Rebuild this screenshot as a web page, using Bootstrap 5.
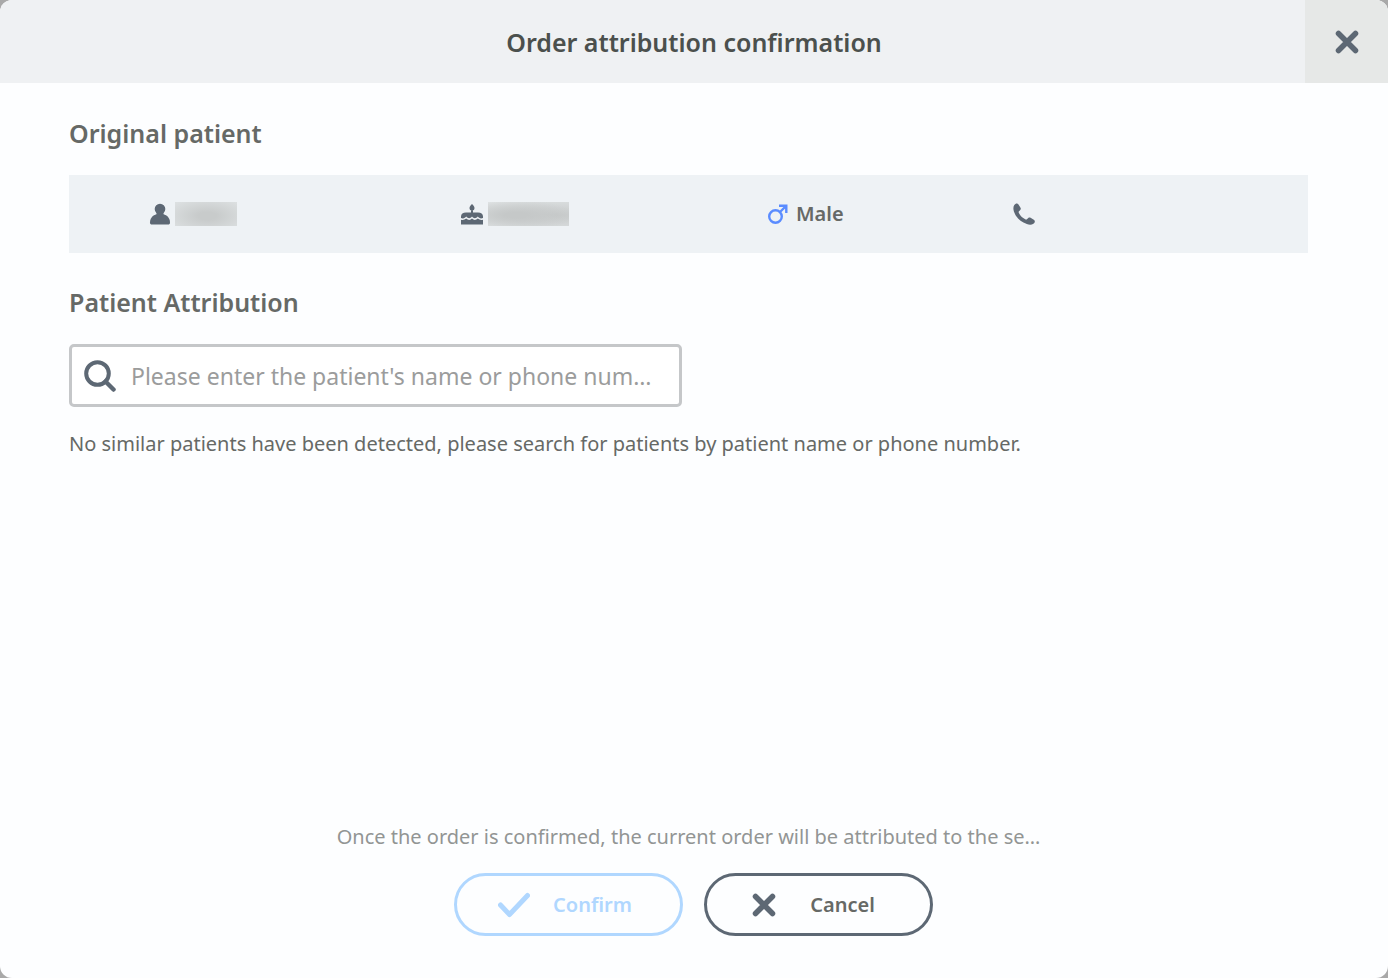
<!DOCTYPE html>
<html lang="en">
<head>
<meta charset="utf-8">
<meta name="viewport" content="width=device-width, initial-scale=1">
<title>Order attribution confirmation</title>
<link href="https://cdn.jsdelivr.net/npm/bootstrap@5.3.0/dist/css/bootstrap.min.css" rel="stylesheet">
<style>
  :root { --ink: #5d6874; --copy: #666966; --disabled: #b0d7ff; }
  body { font-family: "Noto Sans", sans-serif; font-size: 20px; line-height: 28px; color: var(--copy); background: #a9a9a9; }
  .dialog { min-height: 100vh; background: #fdfeff; border-radius: 12px; }
  .dialog-top { background: #eff1f3; min-height: 83px; padding-left: 83px; }
  .dialog-title { font-size: 25px; line-height: 36px; font-weight: 600; color: #4b504d; }
  .close-btn { width: 83px; background: #e6e8e7; color: var(--ink); }
  .dialog-main { padding: 32px 80px 0 69px; }
  .section-title { font-size: 25px; line-height: 36px; font-weight: 600; }
  .patient-bar { display: grid; grid-template-columns: 311fr 308fr 244fr 296fr; padding-left: 80px; height: 78px; margin: 24px 0 31px; background: #eef2f5; }
  .patient-bar svg { color: var(--ink); }
  .patient-bar .male-icon { color: #5a8cff; }
  .redacted { height: 24px; margin-left: 4px; }
  .redacted-name { width: 62px; background: radial-gradient(ellipse at 52% 58%, #c8cbcb 20%, #dce0e1 95%); }
  .redacted-birth { width: 81px; background: radial-gradient(ellipse at 35% 55%, #c5c8c8 15%, transparent 80%), radial-gradient(ellipse at 84% 55%, #c7caca, #dfe3e4); }
  .search { max-width: 613px; height: 63px; margin-top: 24px; border: 3px solid #c5c7c9; border-radius: 5px; background: #fff; padding: 0 12px; color: var(--ink); }
  .search:focus-within { border-color: var(--ink); }
  .search input { font-size: 23px; line-height: 32px; margin-left: 15px; outline: 0; color: var(--copy); }
  .search input::placeholder { color: #9b9c9c; opacity: 1; }
  .hint { margin-top: 23px; }
  .dialog-bottom { padding-bottom: 42px; }
  .note { padding: 0 80px 0 69px; color: #929594; }
  .action { width: 229px; height: 63px; border: 3px solid currentColor; font-size: 20px; font-weight: 600; color: var(--ink); padding: 0 0 0 41px; }
  .action:hover { color: var(--ink); border-color: var(--ink); background: #eef2f5; }
  .action svg { width: 32px; }
  .action span { width: 84px; margin-left: 21px; color: var(--copy); }
  .action:disabled { color: var(--disabled); border-color: var(--disabled); opacity: 1; }
  .action:disabled span { color: inherit; }
  .actions { gap: 21px; margin-top: 22px; padding-right: 2px; }
</style>
</head>
<body>
<div class="dialog d-flex flex-column overflow-hidden" role="dialog" aria-labelledby="dialog-title">
  <header class="dialog-top d-flex align-items-stretch">
    <div class="flex-grow-1 d-flex align-items-center justify-content-center">
      <h1 class="dialog-title m-0" id="dialog-title">Order attribution confirmation</h1>
    </div>
    <button type="button" class="close-btn btn border-0 rounded-0 p-0 d-flex align-items-center justify-content-center" aria-label="Close">
      <svg width="24" height="24" viewBox="0 0 24 24" fill="none" stroke="currentColor" stroke-width="5.500" stroke-linecap="round"><path d="M3.500 3.500l17 17M20.500 3.500l-17 17"/></svg>
    </button>
  </header>

  <main class="dialog-main flex-grow-1">
    <h2 class="section-title m-0">Original patient</h2>
    <div class="patient-bar align-items-center">
      <div class="d-flex align-items-center">
        <svg width="22" height="24" viewBox="0 0 22 24" fill="currentColor" aria-hidden="true"><circle cx="11" cy="7" r="5.300"/><path d="M7.500 9h7v5h-7z"/><path d="M1 20.500C1 16 4 13.300 7.500 12.300h7C18 13.300 21 16 21 20.500c0 1.500-.6 2-2 2H3c-1.400 0-2-.5-2-2z"/></svg>
        <span class="redacted redacted-name" aria-label="Name hidden"></span>
      </div>
      <div class="d-flex align-items-center">
        <svg width="24" height="24" viewBox="0 0 24 24" fill="currentColor" aria-hidden="true"><path d="M12 2c1.400 1.600 2.500 2.700 2.500 4a2.500 2.500 0 0 1-5 0C9.500 4.700 10.600 3.300 12 2zM11 8.500h2V10.500h5c3 0 5 1.500 5 4v1.500c-2.500 1-4 0-5.200-1.500-2 2.300-4 2.300-5.800 0-1.800 2.300-3.800 2.300-5.800 0C5 16 3.500 17 1 16v-1.500c0-2.500 2-4 5-4h5z"/><path d="M1 17.800c2 .5 3.700.1 5.200-1.200 2 1.800 4 1.800 5.800 0 1.800 1.800 3.800 1.800 5.800 0 1.500 1.300 3.200 1.700 5.200 1.200v4.700H1z"/></svg>
        <span class="redacted redacted-birth" aria-label="Birth date hidden"></span>
      </div>
      <div class="d-flex align-items-center">
        <svg class="male-icon" width="20" height="20" viewBox="0 0 20 20" fill="none" stroke="currentColor" stroke-width="2.400" aria-hidden="true"><circle cx="7.500" cy="12.500" r="6.300"/><path d="M12 8l6-6M11 1.700h7.300V9"/></svg>
        <span class="fw-semibold ms-2">Male</span>
      </div>
      <div class="d-flex align-items-center">
        <svg width="24" height="24" viewBox="0 0 24 24" fill="currentColor" aria-hidden="true"><path d="M2.300 3C3.500 1.200 5.500.8 6.500 2.500l2 3.200c.7 1.300.2 2.200-1.300 3.300-.7.600-.7 1.200-.3 2 1.400 2.800 3.500 4.900 6.300 6.300.8.400 1.500.4 2-.3 1.100-1.500 2.100-2 3.400-1.200l3.200 2c1.600 1 1.300 2.800-.4 4-1.600 1.100-4 1.200-6.600.3C8.500 20 3.800 15.200 1.900 9.500 1.100 7 1.200 4.600 2.300 3z"/></svg>
      </div>
    </div>

    <h2 class="section-title m-0">Patient Attribution</h2>
    <label class="search d-flex align-items-center">
      <svg class="flex-shrink-0" width="32" height="32" viewBox="0 0 32 32" fill="none" stroke="currentColor" stroke-width="4" aria-hidden="true"><circle cx="13.500" cy="13.500" r="11.300"/><path d="M21.500 21.500l8 8" stroke-width="4.500" stroke-linecap="round"/></svg>
      <input type="text" class="flex-grow-1 border-0 bg-transparent p-0" placeholder="Please enter the patient's name or phone num…" aria-label="Patient search">
    </label>
    <p class="hint mb-0">No similar patients have been detected, please search for patients by patient name or phone number.</p>
  </main>

  <footer class="dialog-bottom">
    <p class="note m-0 text-center">Once the order is confirmed, the current order will be attributed to the se…</p>
    <div class="actions d-flex justify-content-center">
      <button type="button" class="action btn rounded-pill d-flex align-items-center" disabled>
        <svg height="26" viewBox="0 0 32 26" fill="none" stroke="currentColor" stroke-width="5" stroke-linecap="round" stroke-linejoin="round" aria-hidden="true"><path d="M2.500 13l9 9.500L29.500 3.500"/></svg>
        <span>Confirm</span>
      </button>
      <button type="button" class="action btn rounded-pill d-flex align-items-center">
        <svg height="24" viewBox="0 0 24 24" fill="none" stroke="currentColor" stroke-width="5.500" stroke-linecap="round" aria-hidden="true"><path d="M3.500 3.500l17 17M20.500 3.500l-17 17"/></svg>
        <span>Cancel</span>
      </button>
    </div>
  </footer>
</div>
<script src="https://cdn.jsdelivr.net/npm/bootstrap@5.3.0/dist/js/bootstrap.bundle.min.js"></script>
</body>
</html>
